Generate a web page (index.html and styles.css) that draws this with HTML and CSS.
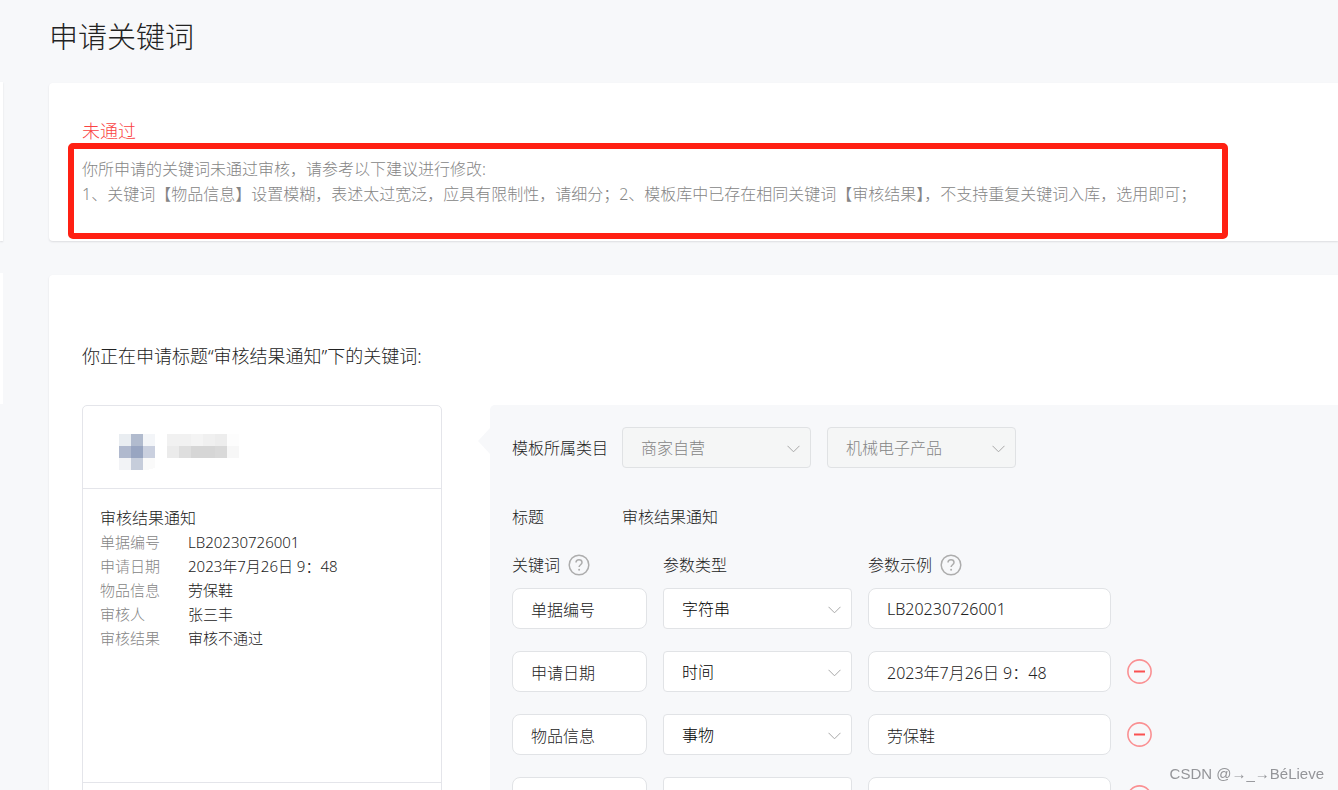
FILE: index.html
```html
<!DOCTYPE html>
<html lang="zh-CN">
<head>
<meta charset="utf-8">
<title>申请关键词</title>
<link rel="stylesheet" href="styles.css">
</head>
<body>
<svg class="defs" aria-hidden="true">
  <symbol id="chevron" viewBox="0 0 13 8"><path d="M.5 .8 6.5 6.8 12.5 .8" fill="none" stroke="currentColor"/></symbol>
  <symbol id="help" viewBox="0 0 22 22"><circle cx="11" cy="11" r="9.8" fill="none" stroke="currentColor" stroke-width="1.5"/><path d="M8 8.6C8 6.8 9.3 5.7 11 5.7s3 1.1 3 2.7c0 2.3-2.9 2.4-2.9 4.7" fill="none" stroke="currentColor" stroke-width="1.5"/><circle cx="11.1" cy="15.8" r="1" fill="currentColor"/></symbol>
  <symbol id="minus" viewBox="0 0 25 25"><circle cx="12.5" cy="12.5" r="11.6" fill="none" stroke="#fa9092" stroke-width="1.6"/><path d="M7 12.5h11" stroke="#fa5151" stroke-width="2"/></symbol>
</svg>
<div class="page">
  <aside class="side"><div class="side-card side-card-tall"></div><div class="side-card"></div></aside>
  <main class="main">
    <h1 class="page-title">申请关键词</h1>
    <section class="card status">
      <h2 class="status-title">未通过</h2>
      <div class="status-desc">
        <p>你所申请的关键词未通过审核，请参考以下建议进行修改:</p>
        <p>1、关键词【物品信息】设置模糊，表述太过宽泛，应具有限制性，请细分；2、模板库中已存在相同关键词【审核结果】，不支持重复关键词入库，选用即可；</p>
        <div class="highlight"></div>
      </div>
    </section>
    <section class="card apply">
      <h2 class="apply-title">你正在申请标题“审核结果通知”下的关键词:</h2>
      <div class="columns">
        <div class="preview">
          <div class="preview-head">
            <svg class="mosaic" width="120" height="36" viewBox="0 0 120 36" shape-rendering="crispEdges" aria-hidden="true">
              <path d="M0 0h12v12H0z" fill="#e9edf1"/><path d="M12 0h12v12H12z" fill="#b1bbce"/><path d="M24 0h12v12H24z" fill="#f3f5f8"/>
              <path d="M0 12h12v12H0z" fill="#b0b9ce"/><path d="M12 12h12v12H12z" fill="#98a5c1"/><path d="M24 12h12v12H24z" fill="#cad0df"/>
              <path d="M0 24h12v12H0z" fill="#f2f3f6"/><path d="M12 24h12v12H12z" fill="#c6cddb"/><path d="M24 24h12v10l-8 2h-4z" fill="#fafafa"/>
              <path d="M48 0h24v12H48z" fill="#f1f1f1"/><path d="M72 0h12v12H72z" fill="#f4f4f4"/><path d="M84 0h12v12H84z" fill="#f0f0f0"/><path d="M96 0h12v12H96z" fill="#ededed"/><path d="M108 0h12v12h-12z" fill="#fdfdfd"/>
              <path d="M48 12h12v12H48z" fill="#ebebeb"/><path d="M60 12h12v12H60z" fill="#dedede"/><path d="M72 12h24v12H72z" fill="#d6d6d6"/><path d="M96 12h12v12H96z" fill="#d9d9d9"/><path d="M108 12h12v12h-12z" fill="#f7f7f7"/>
            </svg>
          </div>
          <div class="preview-body">
            <h3 class="preview-title">审核结果通知</h3>
            <dl class="preview-list">
              <dt>单据编号</dt><dd>LB20230726001</dd>
              <dt>申请日期</dt><dd>2023年7月26日 9：48</dd>
              <dt>物品信息</dt><dd>劳保鞋</dd>
              <dt>审核人</dt><dd>张三丰</dd>
              <dt>审核结果</dt><dd>审核不通过</dd>
            </dl>
          </div>
          <div class="preview-foot"></div>
        </div>
        <form class="panel">
          <div class="category">
            <label for="cat1">模板所属类目</label>
            <span class="select"><select id="cat1" disabled><option>商家自营</option></select><svg class="chevron"><use href="#chevron"/></svg></span>
            <span class="select"><select aria-label="二级类目" disabled><option>机械电子产品</option></select><svg class="chevron"><use href="#chevron"/></svg></span>
          </div>
          <div class="title-row"><span>标题</span><span>审核结果通知</span></div>
          <div class="fields heads">
            <div class="head"><span id="h-key">关键词</span><button type="button" class="icon-button" aria-label="关键词说明"><svg width="22" height="22"><use href="#help"/></svg></button></div>
            <div class="head"><span id="h-type">参数类型</span></div>
            <div class="head"><span id="h-sample">参数示例</span><button type="button" class="icon-button" aria-label="参数示例说明"><svg width="22" height="22"><use href="#help"/></svg></button></div>
          </div>
          <div class="rows">
            <div class="fields">
              <input class="text" aria-labelledby="h-key" value="单据编号">
              <span class="select"><select aria-labelledby="h-type"><option>字符串</option></select><svg class="chevron"><use href="#chevron"/></svg></span>
              <input class="text" aria-labelledby="h-sample" value="LB20230726001">
            </div>
            <div class="fields">
              <input class="text" aria-labelledby="h-key" value="申请日期">
              <span class="select"><select aria-labelledby="h-type"><option>时间</option></select><svg class="chevron"><use href="#chevron"/></svg></span>
              <input class="text" aria-labelledby="h-sample" value="2023年7月26日 9：48">
              <button type="button" class="icon-button" aria-label="删除"><svg width="25" height="25"><use href="#minus"/></svg></button>
            </div>
            <div class="fields">
              <input class="text" aria-labelledby="h-key" value="物品信息">
              <span class="select"><select aria-labelledby="h-type"><option>事物</option></select><svg class="chevron"><use href="#chevron"/></svg></span>
              <input class="text" aria-labelledby="h-sample" value="劳保鞋">
              <button type="button" class="icon-button" aria-label="删除"><svg width="25" height="25"><use href="#minus"/></svg></button>
            </div>
            <div class="fields">
              <input class="text" aria-labelledby="h-key">
              <span class="select"><select aria-labelledby="h-type"><option></option></select><svg class="chevron"><use href="#chevron"/></svg></span>
              <input class="text" aria-labelledby="h-sample">
              <button type="button" class="icon-button" aria-label="删除"><svg width="25" height="25"><use href="#minus"/></svg></button>
            </div>
          </div>
        </form>
      </div>
    </section>
  </main>
</div>
<div class="watermark">CSDN @→_→BéLieve</div>
</body>
</html>
```
FILE: styles.css
```css
* { box-sizing: border-box; }
body, h1, h2, h3, p, dl, dd { margin: 0; }
h1, h2, h3 { font-weight: inherit; }
body {
  background: #f7f8fa;
  color: #222;
  font: 300 16px/24px "Noto Sans", "Noto Sans CJK SC", sans-serif;
}
input, select, button { font: inherit; color: inherit; }
.defs { position: absolute; width: 0; height: 0; }
.page {
  display: grid;
  grid-template-columns: 3px minmax(0, 1fr);
  column-gap: 46px;
  height: 100vh;
  overflow: hidden;
}
.side {
  display: flex;
  flex-direction: column;
  gap: 32px;
  padding-top: 82px;
}
.side-card { height: 131px; background: #fff; }
.side-card-tall { height: 159px; box-shadow: 0 1px 2px #dcdde0; }
.page-title { padding-top: 17px; margin-bottom: 26px; font-size: 29px; line-height: 40px; }
.card {
  background: #fff;
  border-radius: 4px 0 0 4px;
  box-shadow: 0 1px 2px #dcdde0;
  padding-left: 33px;
}
.status { padding-top: 36px; padding-bottom: 34px; }
.status-title { margin-bottom: 14px; color: #fa4343; font-size: 18px; line-height: 24px; }
.status-desc { position: relative; color: #858585; line-height: 25px; }
.highlight {
  position: absolute;
  inset: -14px 110px -32px -14px;
  border: 6px solid #ff2013;
  border-radius: 5px;
}
.apply { margin-top: 34px; padding-top: 68px; }
.apply-title { margin-bottom: 36px; font-size: 18px; line-height: 26px; }
.columns { display: grid; grid-template-columns: 360px minmax(0, 1fr); column-gap: 48px; }
.preview { border: 1px solid #e4e5ea; border-radius: 5px; }
.preview-head { padding: 28px 36px 18px; border-bottom: 1px solid #e4e5ea; }
.mosaic { display: block; }
.preview-body { min-height: 294px; padding: 17px; border-bottom: 1px solid #e4e5ea; }
.preview-title { font-size: 16px; }
.preview-foot { height: 60px; }
.preview-list { display: grid; grid-template-columns: 88px 1fr; font-size: 15px; }
.preview-list dt { color: #858585; }
.panel { position: relative; padding: 22px; background: #f7f8fa; border-radius: 5px 0 0 0; }
.panel::before {
  content: "";
  position: absolute;
  top: 23px;
  left: -12px;
  border: 13px solid transparent;
  border-left: 0;
  border-right: 12px solid #f7f8fa;
}
.category { display: flex; align-items: center; gap: 16px; }
.category label { width: 94px; white-space: nowrap; }
.category .select { width: 189px; }
.title-row { display: grid; grid-template-columns: 110px 1fr; margin-top: 37px; }
.fields {
  display: grid;
  grid-template-columns: 135px 189px 243px 25px;
  column-gap: 16px;
  align-items: center;
}
.heads { margin: 24px 0 11px; }
.head { display: flex; align-items: center; gap: 8px; }
.head .icon-button { color: #adadad; }
.rows { display: grid; row-gap: 22px; }
.text, .select select {
  width: 100%;
  height: 41px;
  padding: 0 18px;
  border: 1px solid #e1e3e6;
  background: #fff;
}
.text { border-radius: 8px; }
.select { display: block; position: relative; }
.select select { display: block; border-radius: 4px; color: #000; appearance: none; }
.select select:disabled { background: #f5f6f6; border-color: #e0e2e4; color: #858585; opacity: 1; }
.chevron {
  position: absolute;
  right: 11px;
  top: 18px;
  width: 13px;
  height: 8px;
  color: #a8a8a8;
  pointer-events: none;
}
.icon-button { display: flex; padding: 0; border: 0; background: none; }
.watermark {
  position: fixed;
  right: 14px;
  bottom: 4px;
  color: #949599;
  font: 15px/24px "Liberation Sans", "Noto Sans CJK SC", sans-serif;
}
```
